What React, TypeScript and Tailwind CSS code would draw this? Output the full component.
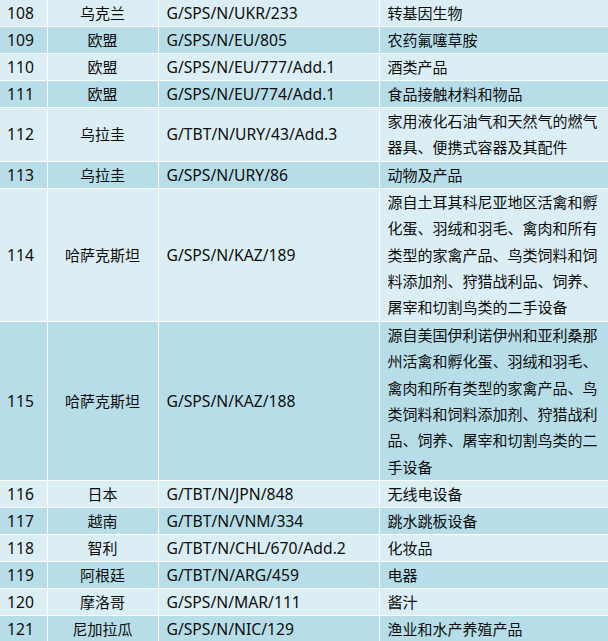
const rows: { no: string; country: string; code: string; desc: string[] }[] = [
  { no: '108', country: '乌克兰', code: 'G/SPS/N/UKR/233', desc: ['转基因生物'] },
  { no: '109', country: '欧盟', code: 'G/SPS/N/EU/805', desc: ['农药氟噻草胺'] },
  { no: '110', country: '欧盟', code: 'G/SPS/N/EU/777/Add.1', desc: ['酒类产品'] },
  { no: '111', country: '欧盟', code: 'G/SPS/N/EU/774/Add.1', desc: ['食品接触材料和物品'] },
  {
    no: '112',
    country: '乌拉圭',
    code: 'G/TBT/N/URY/43/Add.3',
    desc: ['家用液化石油气和天然气的燃气', '器具、便携式容器及其配件'],
  },
  { no: '113', country: '乌拉圭', code: 'G/SPS/N/URY/86', desc: ['动物及产品'] },
  {
    no: '114',
    country: '哈萨克斯坦',
    code: 'G/SPS/N/KAZ/189',
    desc: [
      '源自土耳其科尼亚地区活禽和孵',
      '化蛋、羽绒和羽毛、禽肉和所有',
      '类型的家禽产品、鸟类饲料和饲',
      '料添加剂、狩猎战利品、饲养、',
      '屠宰和切割鸟类的二手设备',
    ],
  },
  {
    no: '115',
    country: '哈萨克斯坦',
    code: 'G/SPS/N/KAZ/188',
    desc: [
      '源自美国伊利诺伊州和亚利桑那',
      '州活禽和孵化蛋、羽绒和羽毛、',
      '禽肉和所有类型的家禽产品、鸟',
      '类饲料和饲料添加剂、狩猎战利',
      '品、饲养、屠宰和切割鸟类的二',
      '手设备',
    ],
  },
  { no: '116', country: '日本', code: 'G/TBT/N/JPN/848', desc: ['无线电设备'] },
  { no: '117', country: '越南', code: 'G/TBT/N/VNM/334', desc: ['跳水跳板设备'] },
  { no: '118', country: '智利', code: 'G/TBT/N/CHL/670/Add.2', desc: ['化妆品'] },
  { no: '119', country: '阿根廷', code: 'G/TBT/N/ARG/459', desc: ['电器'] },
  { no: '120', country: '摩洛哥', code: 'G/SPS/N/MAR/111', desc: ['酱汁'] },
  { no: '121', country: '尼加拉瓜', code: 'G/SPS/N/NIC/129', desc: ['渔业和水产养殖产品'] },
];

export default function App() {
  return (
    <div
      className="w-[608px] h-[641px] overflow-hidden bg-[#daeef3] text-[15px] text-[#0d0d0d]"
      style={{ fontFamily: '"Noto Sans", "Noto Sans CJK SC", sans-serif' }}
    >
      <table className="w-[608px] -mt-px border-collapse table-fixed">
        <colgroup>
          <col className="w-[47px]" />
          <col className="w-[111px]" />
          <col className="w-[221px]" />
          <col className="w-[229px]" />
        </colgroup>
        <tbody>
          {rows.map((r, i) => {
            const bg = i % 2 === 0 ? 'bg-[#daeef3]' : 'bg-[#b7dee8]';
            const lead = r.desc.length > 1 ? 'leading-[26.4px]' : 'leading-[26px]';
            return (
              <tr key={r.no} className={bg}>
                <td className={`border border-white border-l-0 pl-[7px] align-middle text-[15.7px] ${lead}`}>{r.no}</td>
                <td className={`border border-white text-center align-middle ${lead}`}>{r.country}</td>
                <td className={`border border-white pl-[8px] align-middle whitespace-nowrap text-[15.7px] ${lead}`}>
                  {r.code}
                </td>
                <td className={`border border-white border-r-0 pl-[8px] align-top ${lead}`}>
                  {r.desc.map((line) => (
                    <div key={line} className="whitespace-nowrap">
                      {line}
                    </div>
                  ))}
                </td>
              </tr>
            );
          })}
        </tbody>
      </table>
    </div>
  );
}
